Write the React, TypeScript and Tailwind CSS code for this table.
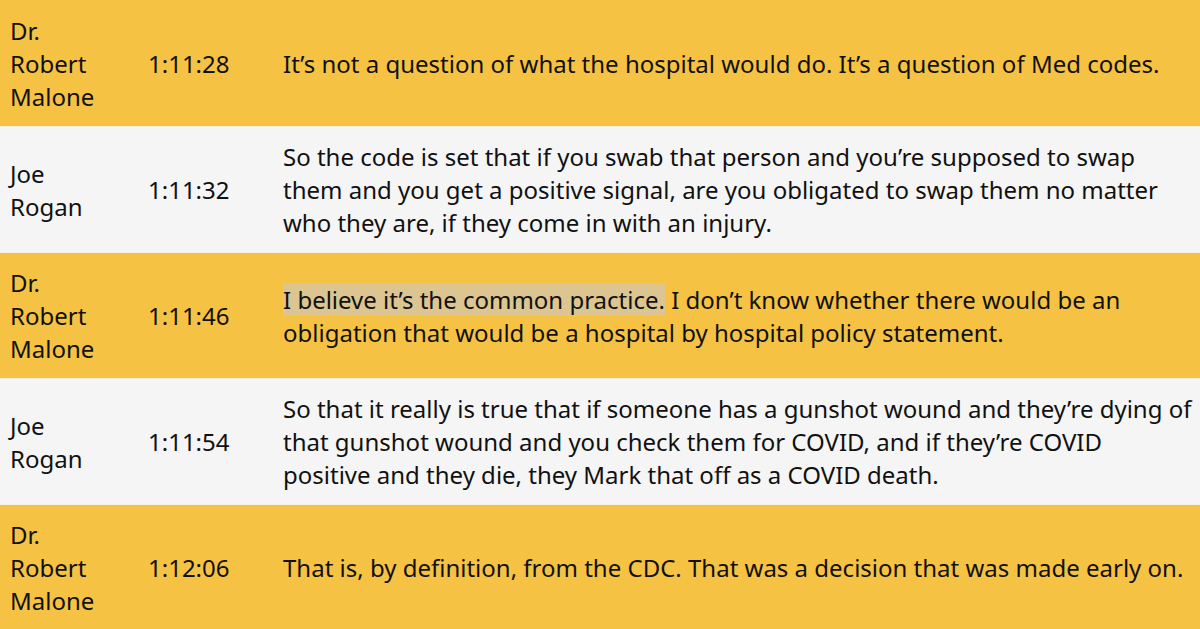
const ROWS = [
  {
    name: "Dr. Robert Malone",
    time: "1:11:28",
    text: "It’s not a question of what the hospital would do. It’s a question of Med codes.",
  },
  {
    name: "Joe Rogan",
    time: "1:11:32",
    text: "So the code is set that if you swab that person and you’re supposed to swap them and you get a positive signal, are you obligated to swap them no matter who they are, if they come in with an injury.",
  },
  {
    name: "Dr. Robert Malone",
    time: "1:11:46",
    highlight: "I believe it’s the common practice.",
    text: " I don’t know whether there would be an obligation that would be a hospital by hospital policy statement.",
  },
  {
    name: "Joe Rogan",
    time: "1:11:54",
    text: "So that it really is true that if someone has a gunshot wound and they’re dying of that gunshot wound and you check them for COVID, and if they’re COVID positive and they die, they Mark that off as a COVID death.",
  },
  {
    name: "Dr. Robert Malone",
    time: "1:12:06",
    text: "That is, by definition, from the CDC. That was a decision that was made early on.",
  },
];

export default function App() {
  return (
    <div className="w-[1200px] h-[629px] overflow-hidden bg-[#f6c244] font-['Noto_Sans',sans-serif] text-[24px] leading-[33px] text-[#111]">
      {ROWS.map((row, i) => (
        <div
          key={i}
          className={`grid grid-cols-[138px_135px_1fr] items-center h-[126px] pl-[10px] pr-[8px] border-t border-[#f7efdc] first:border-t-0 ${
            i % 2 === 0 ? "bg-[#f6c244]" : "bg-[#f5f5f5]"
          }`}
        >
          <div className="w-[95px]">{row.name}</div>
          <div>{row.time}</div>
          <div>
            {row.highlight && <span className="bg-[#dcc591]">{row.highlight}</span>}
            {row.text}
          </div>
        </div>
      ))}
    </div>
  );
}
